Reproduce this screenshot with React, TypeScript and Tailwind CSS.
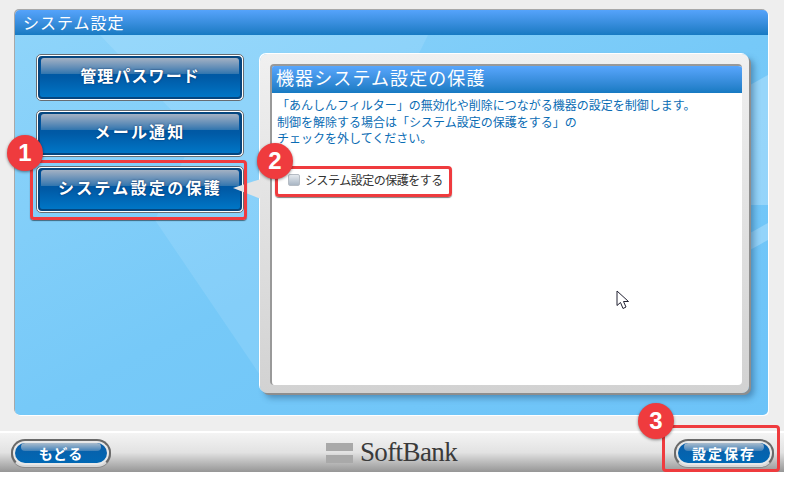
import React from "react";

const jp = "[font-family:'Noto_Sans_CJK_JP',sans-serif]";

function MenuButton({ label, tracking }: { label: string; tracking: string }) {
  return (
    <div className="relative h-[47px] w-[208px] rounded-[5px] border border-[#666c72] bg-white p-[1px]">
      <div className="relative flex h-full w-full items-center justify-center overflow-hidden rounded-[4px] border-2 border-[#05467f] bg-gradient-to-b from-[#004f96] via-[#005aa6] to-[#0076c6]">
        <div className="absolute left-[1px] right-[1px] top-0 h-[16px] rounded-t-[3px] bg-gradient-to-b from-[#a3b1c3] to-[#2f75ae]" />
        <span className={`relative -translate-y-[3px] text-[16px] font-bold text-white ${tracking} [text-shadow:0_0_2px_rgba(0,30,80,0.8)]`}>
          {label}
        </span>
      </div>
    </div>
  );
}

function PillButton({ label, tracking }: { label: string; tracking: string }) {
  return (
    <div className="h-[28px] w-[100px] rounded-full border-2 border-[#696969] border-b-[#d8d8d8] bg-[#e8e8e8] p-[2px] shadow-[0_1px_0_#8a8a8a]">
      <div className="relative flex h-full w-full items-center justify-center overflow-hidden rounded-full bg-gradient-to-b from-[#0a5ea8] to-[#0068b4]">
        <div className="absolute left-[6px] right-[6px] top-0 h-[8px] rounded-full bg-gradient-to-b from-[#a9bccd] to-[#3d80b8]" />
        <span className={`relative text-[14px] font-bold leading-none text-white ${tracking}`}>{label}</span>
      </div>
    </div>
  );
}

function Badge({ n, className }: { n: number; className: string }) {
  return (
    <div className={`absolute flex h-[36px] w-[36px] items-center justify-center rounded-full bg-[#ef3b3e] text-[24px] font-bold text-white shadow-[0_1px_3px_rgba(0,0,0,0.45)] [font-family:'Liberation_Sans',sans-serif] ${className}`}>
      {n}
    </div>
  );
}

export default function App() {
  return (
    <div className={`relative h-[472px] w-[784px] overflow-hidden bg-[#eeeeee] ${jp}`}>
      <div className="px-[15px] pt-[10px]">
        <div className="h-[405px] w-[753px] overflow-hidden rounded-[5px] shadow-[-1px_-1px_0_#a8a8a8,1px_1px_0_#fff]">
          <div className="flex h-[25px] items-center bg-gradient-to-b from-[#55a3fb] to-[#167ac2] pl-[8px] text-[16px] leading-none tracking-[1px] text-white">
            <span className="-translate-y-[1px]">システム設定</span>
          </div>
          <div className="relative flex h-[380px] gap-[16px] bg-gradient-to-br from-[#8ed4fa] via-[#76c9f8] to-[#6cc3f8] pl-[21px] pt-[19px]">
            <div className="absolute inset-0 bg-white/10 [clip-path:polygon(85px_0,413px_0,245px_340px,140px_185px,180px_100px)]" />
            <div className="absolute inset-0 bg-white/25 [clip-path:polygon(735px_50px,753px_40px,753px_170px,735px_170px)]" />
            <div className="absolute inset-0 bg-white/25 [clip-path:polygon(735px_198px,753px_188px,753px_205px,735px_215px)]" />
            <div className="relative flex w-[208px] flex-col gap-[9px]">
              <MenuButton label="管理パスワード" tracking="tracking-[1.1px]" />
              <MenuButton label="メール通知" tracking="tracking-[2.2px]" />
              <MenuButton label="システム設定の保護" tracking="tracking-[2.3px]" />
            </div>
            <div className="relative h-[339px] w-[489px] rounded-[7px] bg-gradient-to-b from-[#f0f0f0] to-[#d2d2d2] pb-[8px] pl-[10px] pr-[7px] pt-[10px] shadow-[-1px_-1px_0_#fff,2px_2px_0_#8e8e8e,5px_5px_6px_rgba(30,70,110,0.45)]">
              <div className="absolute left-[-27px] top-[125px] h-[20px] w-[28px] bg-[#e4e4e4] [clip-path:polygon(0_45%,100%_0,100%_100%)]" />
              <div className="h-full w-full overflow-hidden rounded-[4px] border-l-2 border-t-2 border-[#999] bg-white">
                <div className="flex h-[27px] items-center bg-gradient-to-b from-[#58a6fd] to-[#167ac2] pl-[4px] text-[18px] leading-none tracking-[1.1px] text-white">
                  <span className="-translate-y-[3px]">機器システム設定の保護</span>
                </div>
                <div className="pl-[5px] pt-[4px] text-[12px] leading-[16.5px] text-[#0a6cb4]">
                  <p>「あんしんフィルター」の無効化や削除につながる機器の設定を制御します。</p>
                  <p>制御を解除する場合は「システム設定の保護をする」の</p>
                  <p>チェックを外してください。</p>
                </div>
                <div className="flex items-center gap-[5px] pl-[16px] pt-[25px] text-[12px] leading-[16px] tracking-[-0.5px] text-[#333]">
                  <span className="h-[12px] w-[12px] rounded-[2px] border border-[#b5bcc4] bg-gradient-to-b from-[#e4e9ee] to-[#a9b6c4]" />
                  <span>システム設定の保護をする</span>
                </div>
              </div>
            </div>
          </div>
        </div>
      </div>

      <div className="absolute bottom-0 left-0 right-0 flex h-[41px] items-center justify-between border-t-2 border-white bg-gradient-to-b from-[#f4f4f4] via-[#e2e2e2] to-[#969696] pl-[11px] pr-[10px]">
        <PillButton label="もどる" tracking="tracking-[1px]" />
        <div className="flex -translate-x-[1px] items-center gap-[7px]">
          <div className="flex flex-col gap-[4px]">
            <div className="h-[8px] w-[27px] bg-[#a9a9a9]" />
            <div className="h-[8px] w-[27px] bg-[#a9a9a9]" />
          </div>
          <span className="text-[27px] leading-none tracking-[-0.6px] text-[#3a3a3a] [font-family:'Liberation_Serif',serif]">SoftBank</span>
        </div>
        <PillButton label="設定保存" tracking="tracking-[2px]" />
      </div>

      <div className="absolute left-[30px] top-[160px] h-[60px] w-[217px] rounded-[4px] border-[3px] border-[#ef3b3e] shadow-[0_1px_1px_rgba(0,0,0,0.5)]" />
      <div className="absolute left-[275px] top-[166px] h-[31px] w-[177px] rounded-[4px] border-[3px] border-[#ef3b3e] shadow-[0_1px_1px_rgba(0,0,0,0.5)]" />
      <div className="absolute left-[662px] top-[425px] h-[47px] w-[118px] rounded-[4px] border-[3px] border-[#ef3b3e]" />

      <Badge n={1} className="left-[7px] top-[135px]" />
      <Badge n={2} className="left-[257px] top-[143px]" />
      <Badge n={3} className="left-[638px] top-[403px]" />

      <svg className="absolute left-[616px] top-[290px]" width="15" height="20" viewBox="0 0 15 20">
        <path d="M1 1 V15.5 L4.5 12.5 L7 18.5 L10 17 L7.5 11.5 H12.5 Z" fill="#fff" stroke="#223" strokeWidth="1" />
      </svg>
    </div>
  );
}
